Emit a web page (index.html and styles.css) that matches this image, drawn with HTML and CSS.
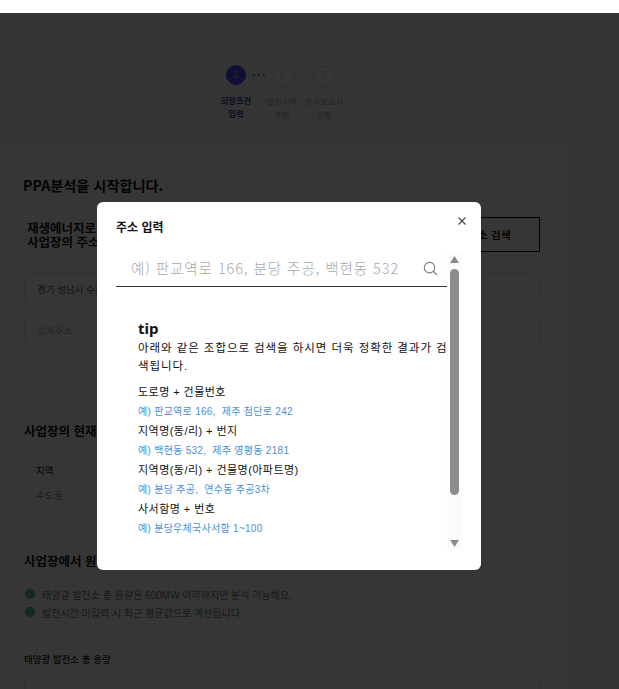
FILE: index.html
```html
<!DOCTYPE html>
<html lang="ko">
<head>
<meta charset="utf-8">
<title>PPA분석</title>
<link rel="stylesheet" href="styles.css">
</head>
<body>
<div class="page">
  <header class="topbar"></header>
  <main class="main">
    <ol class="steps">
      <li class="step active"><span class="num">1</span><span class="label">희망조건<br>입력</span></li>
      <li class="dots wide active-dots"><i></i><i></i><i></i></li>
      <li class="step"><span class="num">2</span><span class="label">발전지역<br>추천</span></li>
      <li class="dots tight"><i></i><i></i><i></i></li>
      <li class="step last-step"><span class="num">3</span><span class="label">분석보고서<br>신청</span></li>
    </ol>
    <section class="card">
      <h1>PPA분석을 시작합니다.</h1>
      <div class="addr-head">
        <h2 class="addr-title">재생에너지로 전력을 공급받을<br>사업장의 주소를 입력해주세요.</h2>
        <button class="addr-btn">주소 검색</button>
      </div>
      <div class="field">경기 성남시 수정구 창업로 43</div>
      <div class="field muted">상세주소</div>
      <h3 class="sec now">사업장의 현재 전력 사용 정보</h3>
      <div class="region"><b>지역</b><span>수도권</span></div>
      <h3 class="sec want">사업장에서 원하는 발전소 정보</h3>
      <p class="note"><i class="bullet"></i>태양광 발전소 총 용량은 600MW 이하까지만 분석 가능해요.</p>
      <p class="note"><i class="bullet"></i>발전시간 미입력 시 최근 평균값으로 계산됩니다.</p>
      <h4 class="cap">태양광 발전소 총 용량</h4>
      <div class="field last"></div>
    </section>
  </main>
</div>

<div class="overlay"></div>

<div class="modal" role="dialog">
  <div class="modal-title">주소 입력</div>
  <svg class="close" viewBox="0 0 10 10" width="10" height="10"><path d="M1.5 1.5l7 7M8.5 1.5l-7 7" fill="none" stroke="#444" stroke-width="1.1"/></svg>
  <div class="modal-body">
    <div class="content">
      <div class="search">
        <span class="ph">예) 판교역로 166, 분당 주공, 백현동 532</span>
        <svg class="mag" viewBox="0 0 16 16" width="15" height="15"><circle cx="7" cy="7" r="5.6" fill="none" stroke="#7d7d7d" stroke-width="1.2"/><path d="M11 11l3.8 3.8" fill="none" stroke="#7d7d7d" stroke-width="1.4"/></svg>
      </div>
      <div class="tip">
        <div class="tip-title">tip</div>
        <p class="tip-desc">아래와 같은 조합으로 검색을 하시면 더욱 정확한 결과가 검색됩니다.</p>
        <dl class="combos">
          <dt>도로명 + 건물번호</dt>
          <dd>예) 판교역로 166, &nbsp;제주 첨단로 242</dd>
          <dt>지역명(동/리) + 번지</dt>
          <dd>예) 백현동 532, &nbsp;제주 영평동 2181</dd>
          <dt>지역명(동/리) + 건물명(아파트명)</dt>
          <dd>예) 분당 주공, &nbsp;연수동 주공3차</dd>
          <dt>사서함명 + 번호</dt>
          <dd>예) 분당우체국사서함 1~100</dd>
        </dl>
      </div>
    </div>
    <div class="scrollbar">
      <svg class="arrow" viewBox="0 0 9 7" width="9" height="7"><path d="M4.5 0L9 7H0z" fill="#8a8a8a"/></svg>
      <div class="thumb"></div>
      <svg class="arrow down" viewBox="0 0 9 7" width="9" height="7"><path d="M0 0h9L4.5 7z" fill="#8a8a8a"/></svg>
    </div>
  </div>
</div>
</body>
</html>
```

FILE: styles.css
```css
* { box-sizing: border-box; }
html, body { margin: 0; padding: 0; height: 100%; overflow: hidden; }
body {
  font-family: "Liberation Sans", "Noto Sans CJK KR", sans-serif;
  background: #fff;
  color: #111;
}
.page { width: 619px; height: 689px; overflow: hidden; background: #fff; }
.topbar { height: 13px; background: #fff; }
.main { background: #f4f6fa; height: 676px; }

/* Steps */
.steps {
  list-style: none;
  margin: 0 0 0 220px;
  padding: 52px 0 0 0;
  height: 130px;
  display: flex;
  align-items: flex-start;
}
.step { width: 32px; display: flex; flex-direction: column; align-items: center; }
.step.last-step { width: 40px; }
.num {
  width: 19px; height: 19px;
  margin-top: 1px;
  border-radius: 50%;
  border: 1px solid #e6e6e6;
  color: #d5d5d5;
  font-size: 10px;
  line-height: 17px;
  text-align: center;
  background: #fff;
  flex: none;
}
.step.active .num {
  background: #4a4ff5; border-color: #4a4ff5; color: #b5b8ff;
  width: 20px; height: 20px; line-height: 18px; margin-top: 0;
}
.label {
  margin-top: 11px;
  text-align: center;
  font-size: 8.3px;
  line-height: 12.5px;
  color: #aaa;
  white-space: nowrap;
}
.step.active .label { color: #3a3d9a; font-weight: 700; margin-top: 10px; }
.dots { height: 20px; display: flex; gap: 2.5px; align-items: center; justify-content: center; flex: none; }
.dots.wide { width: 14px; }
.dots.tight { width: 6px; }
.dots i { width: 2.5px; height: 2.5px; border-radius: 50%; background: #c9c9c9; flex: none; }
.active-dots i { background: #4a4ff5; }

/* Card */
.card { width: 570px; height: 546px; background: #fff; padding: 30px 24px 0; }
h1 { margin: 0 0 0 -1px; font-size: 14.2px; line-height: 24px; font-weight: 700; color: #111; font-family: "Noto Sans CJK KR", sans-serif; }
.addr-head { display: flex; justify-content: space-between; align-items: flex-start; margin-top: 20px; }
.addr-title { margin: 4px 0 0 3px; font-size: 12.5px; line-height: 14px; font-weight: 700; color: #111; white-space: nowrap; font-family: "Noto Sans CJK KR", sans-serif; }
.addr-btn {
  width: 125px; height: 35px;
  border: 1px solid #111; background: #fff;
  font: 700 10.5px "Noto Sans CJK KR", sans-serif;
  letter-spacing: 0.2px;
  color: #111;
  padding: 0 0 0 24px;
  margin-right: 6px;
}
.field {
  width: 516px; height: 35px;
  margin-top: 6px;
  border: 1px solid #e8e8e8; border-radius: 8px;
  background: #fff;
  padding-left: 12px;
  font-size: 9.5px; line-height: 33px;
  color: #555;
  font-family: "Noto Sans CJK KR", sans-serif;
}
.addr-head + .field { margin-top: 20px; }
.field.muted { color: #aaa; }
.sec { margin: 0; font-size: 12.5px; line-height: 18px; font-weight: 700; color: #111; font-family: "Noto Sans CJK KR", sans-serif; }
.sec.now { margin-top: 74px; }
.region {
  width: 516px; height: 58px; margin-top: 18px;
  padding: 0 11px;
  border: 1px solid #efefef;
  border-radius: 8px;
  display: flex; flex-direction: column;
  font-size: 9.5px;
  font-family: "Noto Sans CJK KR", sans-serif;
}
.region b { font-weight: 400; margin-top: 4px; line-height: 14px; }
.region span { margin-top: 11px; line-height: 14px; color: #7d82b8; }
.sec.want { margin-top: 36px; }
.note { margin: 0; height: 18px; display: flex; align-items: center; gap: 7px; font-size: 10px; color: #777; white-space: nowrap; }
.want + .note { margin-top: 15px; }
.bullet { width: 10px; height: 10px; border-radius: 50%; background: #5fbf95; margin-left: 1px; flex: none; }
.cap { margin: 31px 0 0; font-size: 9.5px; line-height: 14px; font-weight: 500; color: #222; font-family: "Noto Sans CJK KR", sans-serif; }
.field.last { margin-top: 9px; }

/* Overlay */
.overlay {
  position: fixed;
  left: 0; right: 0; top: 13px; bottom: 0;
  z-index: 1;
  background: rgba(0, 0, 0, 0.79);
  backdrop-filter: blur(0.6px);
}

/* Modal */
.modal {
  position: fixed;
  z-index: 3;
  left: 97px; top: 202px;
  width: 384px; height: 368px;
  background: #fff;
  border-radius: 6px;
  padding: 17px 0 0 19px;
}
.modal-title { font-size: 12px; line-height: 16px; font-weight: 700; color: #111; font-family: "Noto Sans CJK KR", sans-serif; }
.close { position: absolute; right: 14px; top: 14px; }
.modal-body { display: flex; margin-top: 18px; height: 291px; }
.content { width: 331px; flex: none; }
.search {
  height: 34px;
  border-bottom: 1px solid #333;
  display: flex; align-items: center; justify-content: space-between;
  padding: 0 9px 3px 15px;
}
.ph { font-size: 14.5px; line-height: 30px; color: #a8a8a8; font-weight: 300; white-space: nowrap; letter-spacing: 0.94px; font-family: "Noto Sans CJK KR", sans-serif; }
.mag { flex: none; }
.tip { padding: 32px 0 0 22px; }
.tip-title { font: 700 15px/18px "Noto Sans", sans-serif; color: #111; }
.tip-desc { margin: 2px 0 0; width: 312px; font-size: 11.5px; line-height: 18px; color: #111; word-break: break-all; letter-spacing: 0.94px; }
.combos { margin: 7px 0 0; }
.combos dt { font-size: 11px; line-height: 20px; height: 20px; color: #111; white-space: nowrap; letter-spacing: 0.45px; }
.combos dd { margin: 0; font-size: 10px; line-height: 19px; height: 19px; color: #4a90d9; white-space: nowrap; letter-spacing: 0.28px; }
.scrollbar {
  width: 15px;
  background: #fbfbfb;
  display: flex; flex-direction: column; align-items: center;
  padding-top: 4px; flex: none;
  height: 298px; margin-top: -1px;
}
.thumb { width: 9px; height: 226px; margin-top: 6px; background: #8c8c8c; border-radius: 5px; flex: none; }
.arrow { flex: none; }
.arrow.down { margin-top: 45px; }
```
